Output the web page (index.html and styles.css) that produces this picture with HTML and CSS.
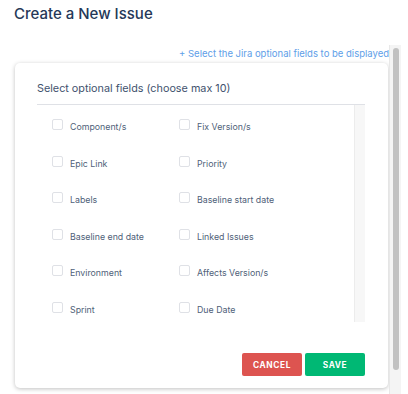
FILE: index.html
```html
<!DOCTYPE html>
<html lang="en">
<head>
    <meta charset="UTF-8">
    <meta name="viewport" content="width=device-width, initial-scale=1.0">
    <title>Create a New Issue</title>
    <link rel="stylesheet" href="styles.css">
</head>
<body>

<h1 class="page-title">Create a New Issue</h1>

<div class="page-body">
    <div class="page-content">
        <div class="jira-link">+ Select the Jira optional fields to be displayed</div>

        <div class="modal">
            <h2 class="modal-title">Select optional fields (choose max 10)</h2>

            <div class="field-scroll">
                <div class="field-grid">
                    <label class="field"><span class="box"></span>Component/s</label>
                    <label class="field"><span class="box"></span>Fix Version/s</label>
                    <label class="field"><span class="box"></span>Epic Link</label>
                    <label class="field"><span class="box"></span>Priority</label>
                    <label class="field"><span class="box"></span>Labels</label>
                    <label class="field"><span class="box"></span>Baseline start date</label>
                    <label class="field"><span class="box"></span>Baseline end date</label>
                    <label class="field"><span class="box"></span>Linked Issues</label>
                    <label class="field"><span class="box"></span>Environment</label>
                    <label class="field"><span class="box"></span>Affects Version/s</label>
                    <label class="field"><span class="box"></span>Sprint</label>
                    <label class="field"><span class="box"></span>Due Date</label>
                </div>
                <div class="inner-track"></div>
            </div>

            <div class="modal-buttons">
                <button class="btn btn-cancel">CANCEL</button>
                <button class="btn btn-save">SAVE</button>
            </div>
        </div>
    </div>

    <!-- fake page scrollbar -->
    <div class="page-scrollbar">
        <div class="thumb"></div>
    </div>
</div>

</body>
</html>
```

FILE: styles.css
```css
body {
    margin: 0;
    padding: 0;
    background-color: #fff;
    font-family: 'Inter', 'Liberation Sans', sans-serif;
    color: #172b4d;
}

.page-title {
    margin: 0;
    padding: 4px 0 0 14px;
    height: 41px;
    box-sizing: border-box;
    font-size: 15px;
    font-weight: 500;
    color: #253858;
}

.page-body {
    display: flex;
    height: 353px;
}

.page-content {
    width: 374px;
    padding-left: 15px;
}

.jira-link {
    text-align: right;
    font-size: 9.5px;
    color: #5e9ee8;
    padding: 7px 0 0;
    height: 15px;
}

.modal {
    width: 373px;
    box-sizing: border-box;
    height: 325px;
    border-radius: 5px;
    box-shadow: 0 1px 4px rgba(0, 0, 0, 0.25);
    padding: 19px 23px 0 22px;
    display: flex;
    flex-direction: column;
}

.modal-title {
    margin: 0;
    font-size: 10.8px;
    font-weight: 400;
    color: #42526e;
    height: 22px;
    border-bottom: 1px solid #dfe1e6;
}

.field-scroll {
    display: flex;
    height: 217px;
}

.field-grid {
    flex: 1;
    display: grid;
    grid-template-columns: 127px 1fr;
    grid-auto-rows: 36.5px;
    padding: 15px 0 0 15px;
}

.field {
    display: flex;
    align-items: flex-start;
    font-size: 8.8px;
    color: #505f79;
    line-height: 14px;
}

.box {
    width: 9px;
    height: 9px;
    border: 1px solid #dfe1e6;
    border-radius: 2px;
    margin: -1px 7px 0 0;
    flex-shrink: 0;
}

.inner-track {
    width: 10px;
    background-color: #f7f7f7;
    border-left: 1px solid #ececec;
}

.modal-buttons {
    display: flex;
    justify-content: flex-end;
    gap: 3px;
    margin-top: 31px;
}

.btn {
    width: 60px;
    height: 23px;
    border: none;
    border-radius: 2px;
    color: white;
    font-family: 'Inter', 'Liberation Sans', sans-serif;
    font-size: 8.3px;
    font-weight: 700;
    letter-spacing: 0.6px;
    cursor: pointer;
}

.btn-cancel {
    background-color: #dd5450;
}

.btn-save {
    background-color: #00b874;
}

.page-scrollbar {
    width: 12px;
    margin-left: 0;
    margin-top: 4px;
    background-color: #f4f4f4;
    border-left: 1px solid #e8e8e8;
    padding: 3px 2px;
    box-sizing: border-box;
}

.thumb {
    width: 6px;
    height: 322px;
    margin-left: 1px;
    background-color: #c1c1c1;
    border-radius: 3px;
}
```
